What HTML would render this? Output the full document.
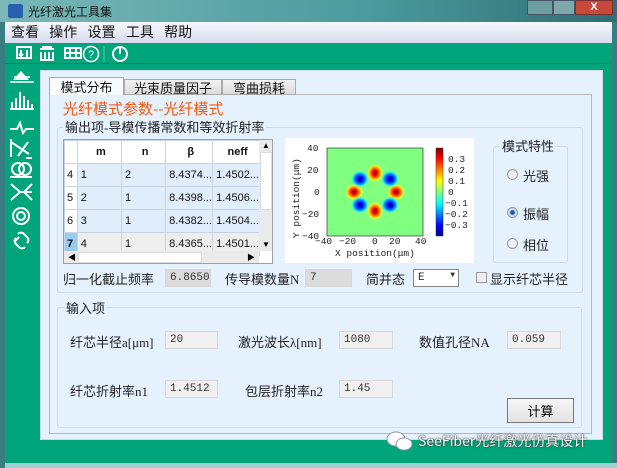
<!DOCTYPE html>
<html><head><meta charset="utf-8">
<style>
*{margin:0;padding:0;box-sizing:border-box}
body{width:617px;height:468px;overflow:hidden;background:#3a7d80;font-family:"Liberation Sans","Noto Sans CJK SC",sans-serif;position:relative}
.a{position:absolute}
.cn{font-family:"Noto Sans CJK SC","WenQuanYi Zen Hei",sans-serif}
.fld{position:absolute;background:#f0f0f0;border:1px solid #d8d8d8;font-family:"Liberation Mono",monospace;font-size:11px;color:#333;padding:2px 4px}
.lbl{position:absolute;font-size:13px;color:#222;font-family:"Liberation Serif","Noto Sans CJK SC",sans-serif;white-space:nowrap}
table{border-collapse:collapse;font-size:11px}
td{border:1px solid #c8d4e0;height:23px;padding-left:3px;color:#111}
</style></head><body>
<div class="a" style="left:0;top:0;width:617px;height:22px;background:linear-gradient(90deg,#7ab8b8,#4b9a9d 60%,#2f6e72)"></div>
<div class="a" style="left:8px;top:4px;width:15px;height:14px;background:#2a5fb0;border-radius:2px"></div>
<div class="a cn" style="left:28px;top:3px;font-size:12px;color:#111">光纤激光工具集</div>
<div class="a" style="left:527px;top:0;width:26px;height:15px;background:#6f9ea0;border:1px solid #456"></div>
<div class="a" style="left:553px;top:0;width:22px;height:15px;background:#7fa9aa;border:1px solid #456"></div>
<div class="a" style="left:575px;top:0;width:38px;height:15px;background:#c8483a;border:1px solid #733;color:#fff;font-size:11px;text-align:center;line-height:13px;font-weight:bold">X</div>
<div class="a" style="left:5px;top:22px;width:607px;height:441px;background:#00a57b"></div>
<div class="a" style="left:5px;top:22px;width:607px;height:21px;background:linear-gradient(#f6f7fb,#d7dbee)"></div>
<div class="a cn" style="left:11px;top:22px;font-size:14px;color:#111;word-spacing:2px">查看&nbsp; 操作&nbsp; 设置&nbsp; 工具&nbsp; 帮助</div>
<div class="a" style="left:5px;top:63px;width:607px;height:1px;background:#00875f"></div>
<div class="a" style="left:5px;top:463px;width:612px;height:5px;background:#9fcfd0"></div>
<svg class="a" style="left:8px;top:44px" width="125" height="19" viewBox="0 0 125 19">
<g fill="none" stroke="#fff" stroke-width="2">
<rect x="9" y="3" width="14" height="11"/><path d="M13 6v6M11 10l2 2 2-2M19 6v7"/>
<path d="M32 5h14M33 8v8M37 8v8M41 8v8M45 8v8M32 16h14M34 3h10"/>
<path d="M57 4h16v10H57zM57 9h16M62 4v10M68 4v10"/>
<circle cx="83" cy="10" r="7.5" stroke-width="1.5"/>
<circle cx="112" cy="10" r="7"/><path d="M112 2v8"/>
</g>
<text x="83" y="14" font-size="11" fill="#fff" text-anchor="middle" font-family="Liberation Sans">?</text>
<path d="M96 2v16" stroke="#5fc9a6"/>
</svg>
<svg class="a" style="left:6px;top:66px" width="34" height="185" viewBox="0 0 34 185">
<g fill="#fff" stroke="#fff" stroke-width="1.5">
<path d="M7 14L15 5 23 14z" stroke="none"/><path d="M4 16h24M8 11h16" fill="none"/>
<path d="M6 42v-6M10 42v-10M14 42v-16M18 42v-12M22 42v-8M26 42v-4M4 43h24" fill="none" stroke-width="2"/>
<path d="M4 63h7l3-6 3 10 3-4h8" fill="none" stroke-width="2"/>
<path d="M5 73v18M5 76l18 12M12 90l10-14M20 92h6" fill="none" stroke-width="2"/>
<circle cx="12" cy="103" r="6" fill="none" stroke-width="2"/><circle cx="19" cy="103" r="6" fill="none" stroke-width="2"/><path d="M4 111h22" fill="none" stroke-width="2"/>
<path d="M5 118l9 8-9 8M14 126h4l8-8M18 126l8 0M18 126l8 8" fill="none" stroke-width="2"/>
<circle cx="15" cy="150" r="8" fill="none" stroke-width="2"/><circle cx="15" cy="150" r="4" fill="none" stroke-width="2"/>
<path d="M8 176l5-5M12 168a4 4 0 016 0l3 3a4 4 0 010 6M10 172a4 4 0 000 6l3 3a4 4 0 006 0" fill="none" stroke-width="2"/>
</g></svg>
<div class="a" style="left:40px;top:70px;width:563px;height:370px;background:#e5f1fc;border:1px solid #cfdbe6"></div>
<div class="a" style="left:49px;top:94px;width:543px;height:340px;border:1px solid #b8b8b8;background:#e5f1fc"></div>
<div class="a cn" style="left:49px;top:77px;width:75px;height:18px;background:#f8fbfe;border:1px solid #aaa;border-bottom:none;font-size:13px;text-align:center;line-height:17px;color:#111">模式分布</div>
<div class="a cn" style="left:124px;top:79px;width:98px;height:16px;background:linear-gradient(#f2f2f2,#dcdcdc);border:1px solid #aaa;font-size:13px;text-align:center;line-height:15px;color:#111">光束质量因子</div>
<div class="a cn" style="left:222px;top:79px;width:74px;height:16px;background:linear-gradient(#f2f2f2,#dcdcdc);border:1px solid #aaa;font-size:13px;text-align:center;line-height:15px;color:#111">弯曲损耗</div>
<div class="a cn" style="left:63px;top:98px;font-size:15px;color:#f25a12">光纤模式参数--光纤模式</div>
<div class="a" style="left:57px;top:127px;width:526px;height:166px;border:1px solid #cfdbe6;border-radius:3px"></div>
<div class="lbl" style="left:63px;top:117px;background:#e5f1fc;padding:0 2px">输出项-导模传播常数和等效折射率</div>
<div class="a" style="left:63px;top:139px;width:210px;height:125px;background:#fff;border:1px solid #a0a0a0;overflow:hidden">
<table style="width:196px">
<tr style="background:#fff;font-weight:bold;text-align:center"><td style="width:13px;height:20px"></td><td style="width:47px">m</td><td style="width:47px">n</td><td style="width:47px">β</td><td>neff</td></tr>
<tr style="background:#e0eefb"><td style="background:#fff;padding-left:2px">4</td><td>1</td><td>2</td><td>8.4374...</td><td>1.4502...</td></tr>
<tr style="background:#e0eefb"><td style="background:#fff;padding-left:2px">5</td><td>2</td><td>1</td><td>8.4398...</td><td>1.4506...</td></tr>
<tr style="background:#e0eefb"><td style="background:#fff;padding-left:2px">6</td><td>3</td><td>1</td><td>8.4382...</td><td>1.4504...</td></tr>
<tr style="background:#eeeeee"><td style="background:#99cdf0;font-weight:bold;padding-left:2px">7</td><td>4</td><td>1</td><td>8.4365...</td><td>1.4501...</td></tr>
</table>
<div class="a" style="left:195px;top:0;width:14px;height:111px;background:#eaeaea"><div style="margin:12px 1px 0;height:58px;background:#fff;border:1px solid #ddd"></div></div>
<div class="a" style="left:0;top:111px;width:195px;height:13px;background:#eaeaea"><div style="margin:1px 0 0 14px;width:124px;height:11px;background:#fff;border:1px solid #ddd"></div></div>
<div class="a" style="left:198px;top:1px;font-size:8px">▲</div><div class="a" style="left:198px;top:100px;font-size:8px">▼</div>
<div class="a" style="left:4px;top:112px;font-size:8px">◀</div><div class="a" style="left:183px;top:112px;font-size:8px">▶</div>
</div>
<svg class="a" style="left:285px;top:138px" width="189" height="125" viewBox="0 0 189 125" font-family="Liberation Mono" font-size="9.5">
<rect width="189" height="125" fill="#fff"/>
<defs>
<radialGradient id="r"><stop offset="0" stop-color="#8a0000"/><stop offset=".35" stop-color="#ff1000"/><stop offset=".65" stop-color="#ffb000"/><stop offset=".85" stop-color="#d8ff40"/><stop offset="1" stop-color="#80ff80"/></radialGradient>
<radialGradient id="b"><stop offset="0" stop-color="#00008a"/><stop offset=".35" stop-color="#0010ff"/><stop offset=".65" stop-color="#0090ff"/><stop offset=".85" stop-color="#30f0e0"/><stop offset="1" stop-color="#80ff80"/></radialGradient>
<linearGradient id="cb" x1="0" y1="1" x2="0" y2="0"><stop offset="0" stop-color="#00008f"/><stop offset=".12" stop-color="#0000ff"/><stop offset=".37" stop-color="#00ffff"/><stop offset=".5" stop-color="#80ff80"/><stop offset=".63" stop-color="#ffff00"/><stop offset=".88" stop-color="#ff0000"/><stop offset="1" stop-color="#800000"/></linearGradient>
</defs>
<rect x="42" y="10" width="96" height="88" fill="#80ff80" stroke="#333" stroke-width=".7"/>
<g transform="translate(90,54)">
<ellipse cx="0" cy="-19" rx="8" ry="9" fill="url(#r)"/><ellipse cx="0" cy="19" rx="8" ry="9" fill="url(#r)"/>
<ellipse cx="-21" cy="0" rx="9" ry="8" fill="url(#r)"/><ellipse cx="21" cy="0" rx="9" ry="8" fill="url(#r)"/>
<ellipse cx="-15" cy="-13" rx="8.5" ry="8" fill="url(#b)"/><ellipse cx="15" cy="-13" rx="8.5" ry="8" fill="url(#b)"/>
<ellipse cx="-15" cy="13" rx="8.5" ry="8" fill="url(#b)"/><ellipse cx="15" cy="13" rx="8.5" ry="8" fill="url(#b)"/>
</g>
<rect x="151" y="10" width="7" height="88" fill="url(#cb)" stroke="#333" stroke-width=".5"/>
<g fill="#222">
<text x="163" y="24">0.3</text><text x="163" y="35">0.2</text><text x="163" y="46">0.1</text><text x="163" y="57">0</text><text x="160" y="68">−0.1</text><text x="160" y="79">−0.2</text><text x="160" y="90">−0.3</text>
<text x="22" y="13">40</text><text x="22" y="35">20</text><text x="29" y="57">0</text><text x="17" y="79">−20</text><text x="17" y="101">−40</text>
<text x="30" y="106">−40</text><text x="54" y="106">−20</text><text x="87" y="106">0</text><text x="104" y="106">20</text><text x="130" y="106">40</text>
<text x="50" y="118">X position(μm)</text>
<text transform="translate(14,100) rotate(-90)">Y position(μm)</text>
</g></svg>
<div class="a" style="left:493px;top:146px;width:75px;height:117px;border:1px solid #cfdbe6;border-radius:3px"></div>
<div class="lbl" style="left:500px;top:136px;background:#e5f1fc;padding:0 2px">模式特性</div>
<div class="a" style="left:507px;top:169px;width:11px;height:11px;border-radius:50%;border:1px solid #999;background:#eee"></div>
<div class="lbl" style="left:523px;top:166px">光强</div>
<div class="a" style="left:507px;top:207px;width:11px;height:11px;border-radius:50%;border:1px solid #999;background:radial-gradient(#1a5fa0 30%,#cde 45%)"></div>
<div class="lbl" style="left:523px;top:204px">振幅</div>
<div class="a" style="left:507px;top:238px;width:11px;height:11px;border-radius:50%;border:1px solid #999;background:#eee"></div>
<div class="lbl" style="left:523px;top:235px">相位</div>
<div class="lbl" style="left:63px;top:269px">归一化截止频率</div>
<div class="fld" style="left:165px;top:269px;width:46px;height:18px;background:#dcdcdc">6.8650</div>
<div class="lbl" style="left:225px;top:269px">传导模数量N</div>
<div class="fld" style="left:305px;top:269px;width:47px;height:18px;background:#dcdcdc">7</div>
<div class="lbl" style="left:366px;top:269px">简并态</div>
<div class="fld" style="left:413px;top:269px;width:46px;height:18px;background:#fff;border-color:#888">E<span style="position:absolute;right:3px;top:1px;font-size:8px">▼</span></div>
<div class="a" style="left:476px;top:272px;width:11px;height:11px;border:1px solid #999;background:#eee"></div>
<div class="lbl" style="left:490px;top:269px">显示纤芯半径</div>
<div class="a" style="left:57px;top:307px;width:525px;height:121px;border:1px solid #cfdbe6;border-radius:3px"></div>
<div class="lbl" style="left:64px;top:298px;background:#e5f1fc;padding:0 2px">输入项</div>
<div class="lbl" style="left:70px;top:332px">纤芯半径a[μm]</div>
<div class="fld" style="left:165px;top:331px;width:53px;height:18px">20</div>
<div class="lbl" style="left:238px;top:332px">激光波长λ[nm]</div>
<div class="fld" style="left:339px;top:331px;width:54px;height:18px">1080</div>
<div class="lbl" style="left:419px;top:332px">数值孔径NA</div>
<div class="fld" style="left:507px;top:331px;width:54px;height:18px">0.059</div>
<div class="lbl" style="left:70px;top:381px">纤芯折射率n1</div>
<div class="fld" style="left:165px;top:380px;width:53px;height:18px">1.4512</div>
<div class="lbl" style="left:245px;top:381px">包层折射率n2</div>
<div class="fld" style="left:339px;top:380px;width:54px;height:18px">1.45</div>
<div class="a cn" style="left:507px;top:398px;width:67px;height:25px;background:linear-gradient(#f6f6f6,#e2e2e2);border:1px solid #777;font-size:13px;text-align:center;line-height:23px">计算</div>
<svg class="a" style="left:385px;top:428px" width="30" height="26"><ellipse cx="11" cy="11" rx="9" ry="7" fill="#fff" stroke="#999"/><ellipse cx="19" cy="16" rx="8" ry="6" fill="#fff" stroke="#999"/></svg>
<div class="a cn" style="left:418px;top:431px;font-size:14px;color:#fff;text-shadow:0 0 2px #333,0 0 1px #333">SeeFiber光纤激光仿真设计</div>
</body></html>
